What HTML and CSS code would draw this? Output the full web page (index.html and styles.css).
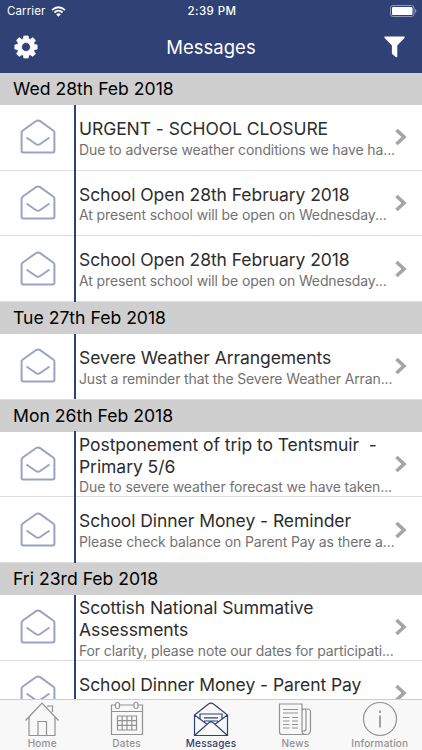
FILE: index.html
```html
<!DOCTYPE html>
<html lang="en">

<head>
    <meta charset="UTF-8">
    <meta name="viewport" content="width=device-width, initial-scale=1.0">
    <title>Messages</title>
    <link rel="stylesheet" href="styles.css">
</head>

<body>
    <svg class="symbols" width="0" height="0">
        <symbol id="envelope" viewBox="0 0 36 36">
            <path d="M1.6 13.5 Q1.6 12.4 2.5 11.7 L15.8 2.2 Q18 .7 20.2 2.2 L33.5 11.7 Q34.4 12.4 34.4 13.5 V31.8 Q34.4 33.4 32.8 33.4 H3.2 Q1.6 33.4 1.6 31.8 Z M7.2 19 L15.8 25 Q18 26.5 20.2 25 L28.8 19" />
        </symbol>
        <symbol id="chevron" viewBox="0 0 12 18">
            <path d="M1.5 2 L9 9 L1.5 16" />
        </symbol>
    </svg>
    <div class="app">
        <header>
            <div class="status-bar">
                <span class="carrier">Carrier
                    <svg width="15" height="11" viewBox="0 0 15 11">
                        <path d="M1 4.2 Q7.5 -1.8 14 4.2 M3.4 6.5 Q7.5 2.8 11.6 6.5" fill="none" stroke="#fff" stroke-width="1.8" />
                        <path d="M5.1 8.3 Q7.5 6.2 9.9 8.3 L7.5 10.8 Z" fill="#fff" />
                    </svg>
                </span>
                <span class="time">2:39 PM</span>
                <svg class="battery" width="27" height="12" viewBox="0 0 27 12">
                    <rect x="0.5" y="0.5" width="23.5" height="11" rx="2.5" fill="none" stroke="#8d98b9" />
                    <rect x="2" y="2" width="20.5" height="8" rx="1" fill="#fff" />
                    <path d="M25 4 Q26.5 4.5 26.5 6 Q26.5 7.5 25 8 Z" fill="#8d98b9" />
                </svg>
            </div>
            <div class="nav-bar">
                <svg width="24" height="24" viewBox="0 0 24 24">
                    <path fill="#fff" fill-rule="evenodd" stroke="#fff" stroke-width=".6" stroke-linejoin="round" d="M9.8 .9 H14.2 L14.8 3.9 L16.1 4.4 L18.8 2.6 L21.5 5.3 L19.8 8 L20.3 9.3 L23.2 9.9 V14.1 L20.3 14.7 L19.8 16 L21.5 18.7 L18.8 21.4 L16.1 19.7 L14.8 20.2 L14.2 23.1 H9.8 L9.2 20.2 L7.9 19.7 L5.2 21.4 L2.5 18.7 L4.2 16 L3.7 14.7 L.8 14.1 V9.9 L3.7 9.3 L4.2 8 L2.5 5.3 L5.2 2.6 L7.9 4.4 L9.2 3.9 Z M12 7.6 A4.4 4.4 0 1 0 12 16.4 A4.4 4.4 0 1 0 12 7.6 Z" />
                </svg>
                <h1>Messages</h1>
                <svg width="21" height="22" viewBox="0 0 21 22">
                    <path fill="#fff" d="M.8 .5 H20.2 Q21.2 1 20.4 2 L13.3 9.4 V20.6 Q13 21.7 12 21.2 L8.2 18 Q7.9 17.7 7.9 17.2 V9.4 L.6 2 Q-.2 1 .8 .5 Z" />
                </svg>
            </div>
        </header>

        <main>
            <h2>Wed 28th Feb 2018</h2>
            <div class="message">
                <div class="status"><svg><use href="#envelope" /></svg></div>
                <div class="content">
                    <h3>URGENT - SCHOOL CLOSURE</h3>
                    <p>Due to adverse weather conditions we have ha...</p>
                </div>
                <svg class="chevron"><use href="#chevron" /></svg>
            </div>
            <div class="message">
                <div class="status"><svg><use href="#envelope" /></svg></div>
                <div class="content">
                    <h3>School Open 28th February 2018</h3>
                    <p>At present school will be open on Wednesday...</p>
                </div>
                <svg class="chevron"><use href="#chevron" /></svg>
            </div>
            <div class="message">
                <div class="status"><svg><use href="#envelope" /></svg></div>
                <div class="content">
                    <h3>School Open 28th February 2018</h3>
                    <p>At present school will be open on Wednesday...</p>
                </div>
                <svg class="chevron"><use href="#chevron" /></svg>
            </div>

            <h2>Tue 27th Feb 2018</h2>
            <div class="message">
                <div class="status"><svg><use href="#envelope" /></svg></div>
                <div class="content">
                    <h3>Severe Weather Arrangements</h3>
                    <p>Just a reminder that the Severe Weather Arran...</p>
                </div>
                <svg class="chevron"><use href="#chevron" /></svg>
            </div>

            <h2>Mon 26th Feb 2018</h2>
            <div class="message">
                <div class="status"><svg><use href="#envelope" /></svg></div>
                <div class="content">
                    <h3>Postponement of trip to Tentsmuir&nbsp; -<br>Primary 5/6</h3>
                    <p>Due to severe weather forecast we have taken...</p>
                </div>
                <svg class="chevron"><use href="#chevron" /></svg>
            </div>
            <div class="message">
                <div class="status"><svg><use href="#envelope" /></svg></div>
                <div class="content">
                    <h3>School Dinner Money - Reminder</h3>
                    <p>Please check balance on Parent Pay as there a...</p>
                </div>
                <svg class="chevron"><use href="#chevron" /></svg>
            </div>

            <h2>Fri 23rd Feb 2018</h2>
            <div class="message">
                <div class="status"><svg><use href="#envelope" /></svg></div>
                <div class="content">
                    <h3>Scottish National Summative<br>Assessments</h3>
                    <p>For clarity, please note our dates for participati...</p>
                </div>
                <svg class="chevron"><use href="#chevron" /></svg>
            </div>
            <div class="message last">
                <div class="status"><svg><use href="#envelope" /></svg></div>
                <div class="content">
                    <h3>School Dinner Money - Parent Pay</h3>
                </div>
                <svg class="chevron"><use href="#chevron" /></svg>
            </div>
        </main>

        <nav class="tab-bar">
            <a class="tab">
                <svg viewBox="0 0 36 36">
                    <path d="M1.5 19.5 L18 2 L34.5 19.5 M5 16 V34.5 H31 V16 M14 34.5 V20.5 H22.5 V34.5 M24 6 V5 H28.5 V11" />
                </svg>
                <span>Home</span>
            </a>
            <a class="tab">
                <svg viewBox="0 0 36 36">
                    <path d="M6.5 4 H2.5 V33.5 H33.5 V4 H29 M10.5 4 H25 M2.5 10.5 H33.5" />
                    <rect x="6.5" y="1.5" width="4" height="6" rx="1.8" />
                    <rect x="25" y="1.5" width="4" height="6" rx="1.8" />
                    <path d="M8.5 15 H27.5 V29 H8.5 Z M8.5 19.7 H27.5 M8.5 24.3 H27.5 M13.2 15 V29 M18 15 V29 M22.8 15 V29" />
                </svg>
                <span>Dates</span>
            </a>
            <a class="tab active">
                <svg viewBox="0 0 36 36">
                    <path d="M1.5 14 L15.5 3 Q18 1.2 20.5 3 L34.5 14 V34.5 H1.5 Z M1.5 14 L14 23.2 M34.5 14 L22 23.2 M1.5 34.5 L15.5 22 Q18 20 20.5 22 L34.5 34.5 M7 18 V13 H29 V18 M11 16.8 H25 M11 20 H25" />
                </svg>
                <span>Messages</span>
            </a>
            <a class="tab">
                <svg viewBox="0 0 36 36">
                    <path d="M25 30 V3 H2.5 V31 Q2.5 33.5 5 33.5 H29 Q25 33.5 25 30 M25 8 H30 Q33.5 8 33.5 11 V29 Q33.5 33.5 29 33.5 M25 10.5 Q25 8 27.5 8 Q29 8 29 11 V28 Q29 30 27 30 H25" />
                    <path d="M6 8.5 H21 M6 12 H21 M6 16.5 H12.5 M6 20 H12.5 M6 23.5 H12.5 M6 27 H12.5 M15 16.5 H21 M15 20 H21 M15 23.5 H21 M15 27 H21" />
                </svg>
                <span>News</span>
            </a>
            <a class="tab">
                <svg viewBox="0 0 36 36">
                    <circle cx="18" cy="18" r="16.5" />
                    <path d="M18 14.5 V26.5 M18 9.5 V12" stroke-width="1.7" />
                </svg>
                <span>Information</span>
            </a>
        </nav>
    </div>
</body>

</html>
```
FILE: styles.css
```css
* {
    box-sizing: border-box;
}

body {
    margin: 0;
    font-family: Inter, "Liberation Sans", sans-serif;
    background-color: #fff;
}

h1, h2, h3, p {
    margin: 0;
    font-weight: 400;
    white-space: nowrap;
}

.symbols {
    display: none;
}

.app {
    display: flex;
    flex-direction: column;
    height: 750px;
    width: 422px;
    overflow: hidden;
}

header {
    height: 73px;
    flex: none;
    background-color: #2f4175;
    color: #fff;
}

.status-bar {
    display: grid;
    grid-template-columns: 1fr auto 1fr;
    align-items: center;
    height: 22px;
    padding: 0 5px 0 7px;
    font-size: 11.5px;
}

.carrier {
    display: flex;
    align-items: center;
    gap: 6px;
    letter-spacing: 0.1px;
}

.time {
    font-weight: 500;
    letter-spacing: 0.4px;
}

.battery {
    justify-self: end;
}

.nav-bar {
    display: flex;
    justify-content: space-between;
    align-items: center;
    height: 50px;
    padding: 0 17px 0 14px;
}

.nav-bar h1 {
    font-size: 18.5px;
}

main {
    flex: 1;
    min-height: 0;
    overflow: hidden;
}

h2 {
    height: 32px;
    padding-left: 13px;
    background-color: #cfcfcf;
    color: #000;
    font-size: 17.6px;
    line-height: 32px;
}

.message {
    display: flex;
    align-items: center;
    height: 65.7px;
    padding-right: 15.5px;
    border-bottom: 1px solid #dedede;
}

.status {
    display: flex;
    align-items: center;
    justify-content: center;
    width: 76px;
    height: 65.7px;
    flex: none;
    padding-left: 2px;
    border-right: 2px solid #2f4175;
}

.status svg {
    width: 36px;
    height: 36px;
    fill: none;
    stroke: #98a3c6;
    stroke-width: 2;
    stroke-linecap: round;
}

.content {
    flex: 1;
    min-width: 0;
    padding: 2px 0 0 3px;
}

.content h3 {
    color: #2d2d2d;
    font-size: 17.5px;
    line-height: 21.7px;
    letter-spacing: -0.06px;
}

.content p {
    color: #727272;
    font-size: 14px;
    line-height: 19px;
    letter-spacing: -0.12px;
}

.chevron {
    width: 12px;
    height: 18px;
    flex: none;
    fill: none;
    stroke: #a5a5a5;
    stroke-width: 3.6;
}

.last .content {
    padding-bottom: 19px;
}

.tab-bar {
    display: grid;
    grid-template-columns: repeat(5, 1fr);
    height: 51px;
    flex: none;
    border-top: 1px solid #cecece;
    background-color: #f8f8f8;
}

.tab {
    display: flex;
    flex-direction: column;
    align-items: center;
    padding-top: 1px;
    color: #929292;
    font-size: 10px;
    font-weight: 500;
    line-height: 12px;
    letter-spacing: 0.2px;
}

.tab svg {
    width: 36px;
    height: 36px;
    fill: none;
    stroke: currentColor;
    stroke-width: 1.2;
}

.tab.active {
    color: #2f4175;
}
```
